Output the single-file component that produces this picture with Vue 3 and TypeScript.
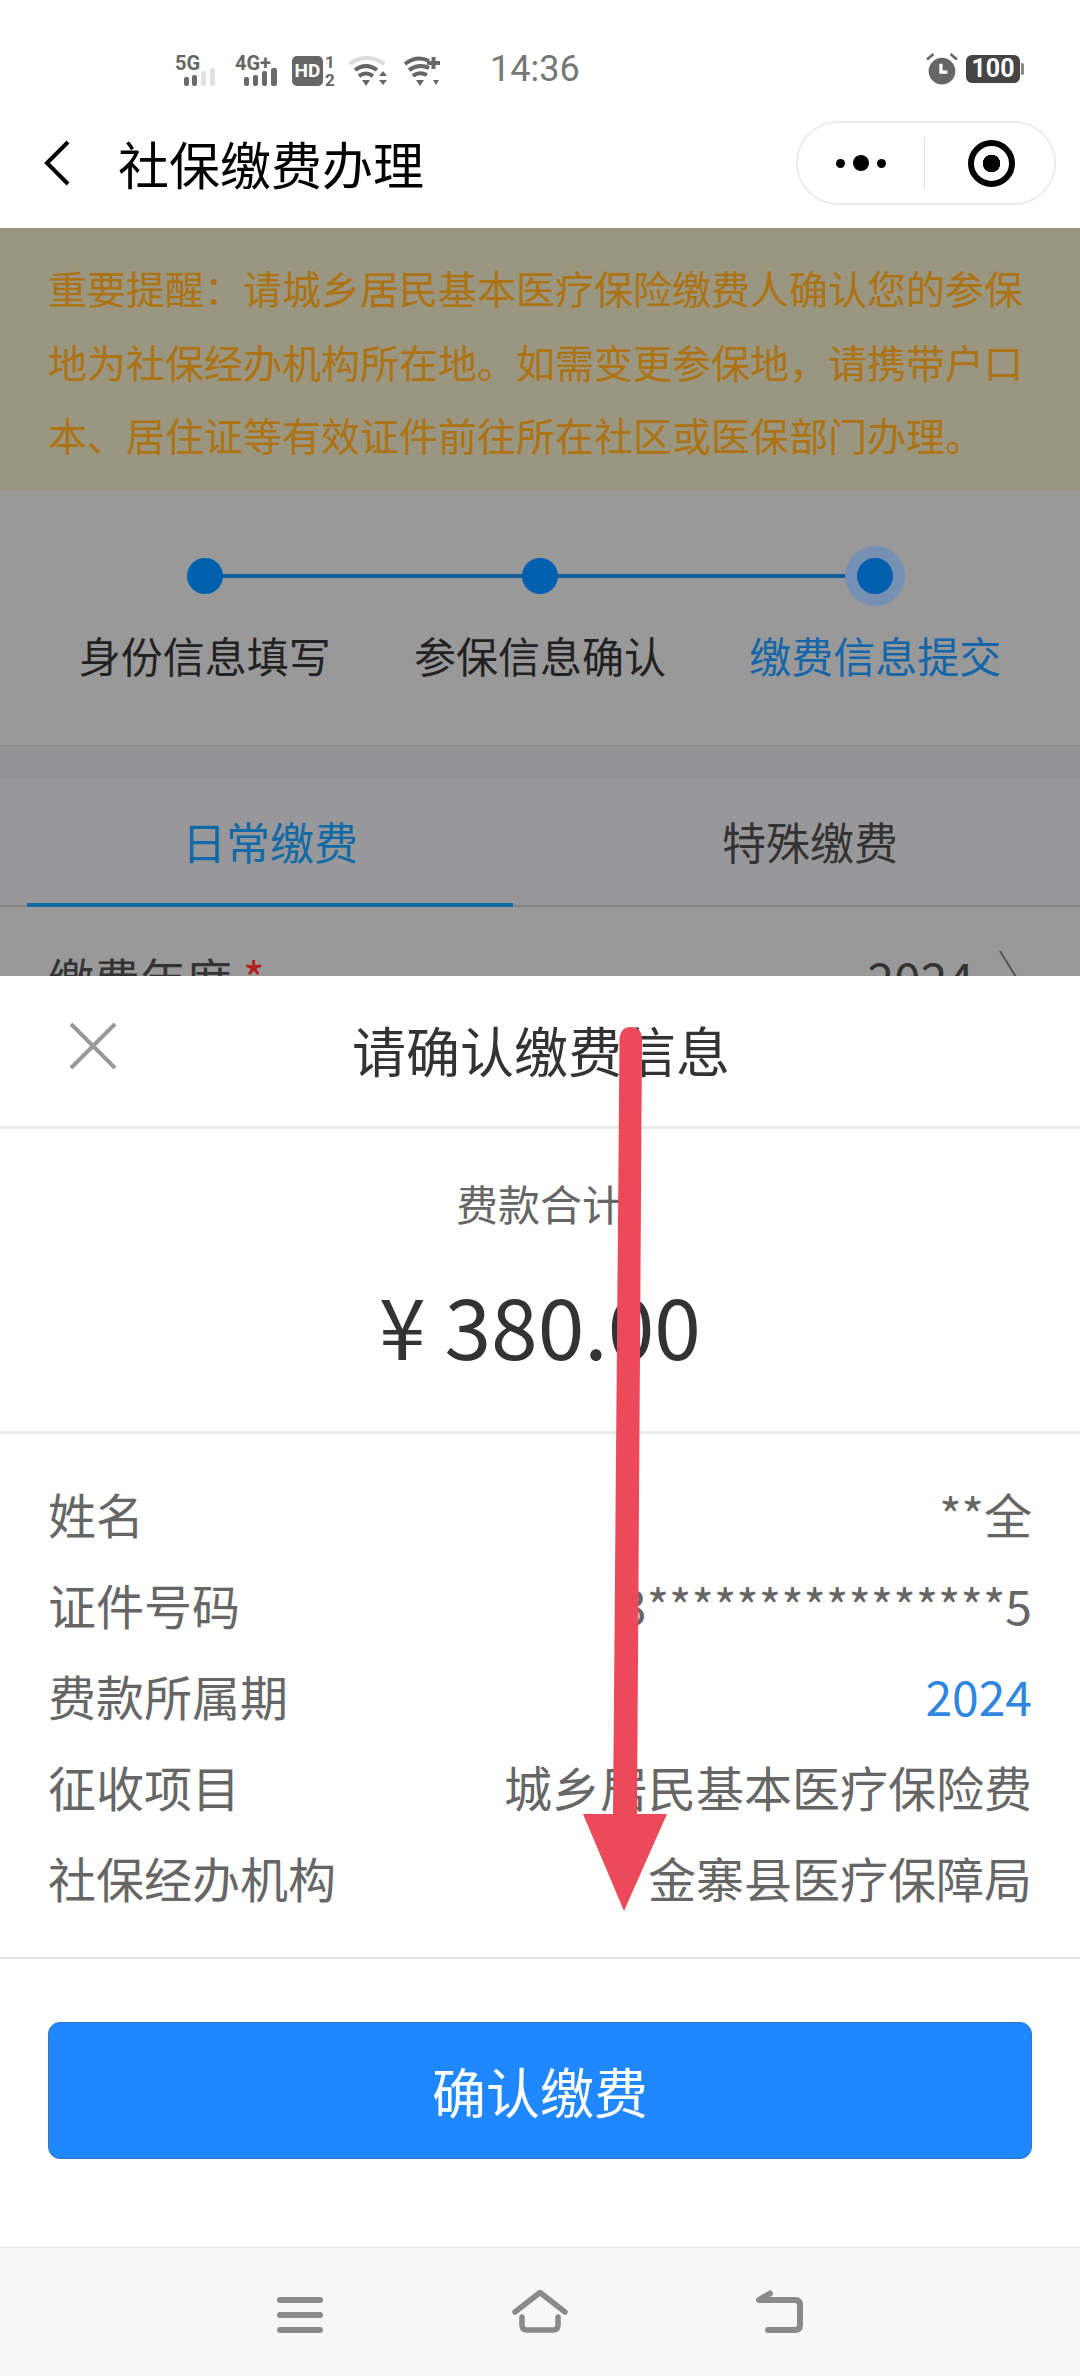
<script setup lang="ts">
interface InfoRow {
  label: string;
  value: string;
  link?: boolean;
}

const steps = [
  { label: '身份信息填写', current: false },
  { label: '参保信息确认', current: false },
  { label: '缴费信息提交', current: true },
];

const rows: InfoRow[] = [
  { label: '姓名', value: '**全' },
  { label: '证件号码', value: '3****************5' },
  { label: '费款所属期', value: '2024', link: true },
  { label: '征收项目', value: '城乡居民基本医疗保险费' },
  { label: '社保经办机构', value: '金寨县医疗保障局' },
];
</script>

<template>
  <div class="screen">
    <!-- Status bar -->
    <div class="status">
      <svg class="sig sig-5g" width="46" height="40" viewBox="0 -6 46 40">
        <text x="1" y="15" class="sig-text">5G</text>
        <rect x="10" y="22" width="5" height="9" rx="2" fill="#6a6a6a" />
        <rect x="18" y="20" width="5" height="11" rx="2" fill="#6a6a6a" />
        <rect x="27" y="16" width="5" height="15" rx="2" fill="#e2e2e2" />
        <rect x="36" y="13" width="5" height="18" rx="2" fill="#e2e2e2" />
      </svg>
      <svg class="sig sig-4g" width="46" height="40" viewBox="0 -6 46 40">
        <text x="0" y="15" class="sig-text">4G+</text>
        <rect x="9" y="22" width="5" height="9" rx="2" fill="#6a6a6a" />
        <rect x="18" y="20" width="5" height="11" rx="2" fill="#6a6a6a" />
        <rect x="27" y="16" width="5" height="15" rx="2" fill="#6a6a6a" />
        <rect x="36" y="13" width="6" height="18" rx="2" fill="#6a6a6a" />
      </svg>
      <svg class="sig sig-hd" width="44" height="40" viewBox="0 -6 44 40">
        <rect x="0" y="1" width="31" height="30" rx="5" fill="#666" />
        <text x="15.5" y="22" text-anchor="middle" class="hd-text">HD</text>
        <text x="38" y="13" text-anchor="middle" class="sim-text">1</text>
        <text x="38" y="31" text-anchor="middle" class="sim-text">2</text>
      </svg>
      <svg class="sig sig-wifi" width="40" height="40" viewBox="0 -6 40 40">
        <path d="M2 8Q17 -2 34 8" fill="none" stroke="#ddd" stroke-width="4" stroke-linecap="round" />
        <path d="M6 15Q17 7 28 15" fill="none" stroke="#666" stroke-width="4" />
        <path d="M10 21Q17 16 24 21" fill="none" stroke="#666" stroke-width="4" />
        <path d="M13 25H21L17 31Z" fill="#666" />
        <path d="M30 21L34 16L38 21ZM30 25H38L34 30Z" fill="#666" />
      </svg>
      <svg class="sig sig-wifi2" width="40" height="40" viewBox="0 -6 40 40">
        <path d="M2 9Q14 0 26 6" fill="none" stroke="#666" stroke-width="4" />
        <path d="M6 15Q16 8 26 13" fill="none" stroke="#666" stroke-width="4" />
        <path d="M10 21Q16 16 24 20" fill="none" stroke="#666" stroke-width="4" />
        <path d="M13 25H21L17 31Z" fill="#666" />
        <path d="M30 25H36L33 30Z" fill="#666" />
        <path d="M24 8H37M30.5 2V14" stroke="#666" stroke-width="4" fill="none" />
      </svg>
      <span class="time">14:36</span>
      <svg class="alarm" width="32" height="32" viewBox="0 0 30 30">
        <circle cx="15" cy="17" r="12.5" fill="#666" />
        <path d="M14 10V18H20" fill="none" stroke="#fff" stroke-width="3" />
        <path d="M1 6L7 1M29 6L23 1" stroke="#666" stroke-width="2.5" />
      </svg>
      <div class="battery"><span>100</span></div>
    </div>

    <!-- Title bar -->
    <div class="navbar">
      <svg class="back" width="30" height="46" viewBox="0 0 30 46">
        <path d="M26 2L5 23L26 44" fill="none" stroke="#000" stroke-width="4" />
      </svg>
      <div class="nav-title">社保缴费办理</div>
      <div class="capsule">
        <div class="capsule-more">
          <i></i><i class="big"></i><i></i>
        </div>
        <div class="capsule-line"></div>
        <div class="capsule-close"><i></i></div>
      </div>
    </div>

    <!-- Page under the sheet -->
    <div class="notice">
      重要提醒：请城乡居民基本医疗保险缴费人确认您的参保地为社保经办机构所在地。如需变更参保地，请携带户口本、居住证等有效证件前往所在社区或医保部门办理。
    </div>

    <div class="steps">
      <div
        v-for="step in steps"
        :key="step.label"
        :class="['step', { current: step.current }]"
      >
        <div class="step-mark"><span class="step-dot"></span></div>
        <div class="step-label">{{ step.label }}</div>
      </div>
    </div>

    <div class="tabs">
      <div class="tab active">日常缴费</div>
      <div class="tab">特殊缴费</div>
    </div>

    <div class="year-row">
      <span class="year-label">缴费年度<em>*</em></span>
      <span class="year-value">2024</span>
      <svg width="24" height="60" viewBox="0 0 24 60">
        <path d="M4 4L20 30" fill="none" stroke="#555" stroke-width="2" />
      </svg>
    </div>

    <!-- Confirm sheet -->
    <div class="sheet">
      <div class="sheet-head">
        <svg class="close" width="48" height="48" viewBox="0 0 48 48">
          <path d="M2 2L46 46M46 2L2 46" stroke="#999" stroke-width="4" fill="none" />
        </svg>
        <div class="sheet-title">请确认缴费信息</div>
      </div>

      <div class="total">
        <div class="total-label">费款合计</div>
        <div class="total-amount">¥ 380.00</div>
      </div>

      <div class="info">
        <div v-for="row in rows" :key="row.label" class="info-row">
          <span class="info-label">{{ row.label }}</span>
          <span :class="['info-value', { link: row.link }]">{{ row.value }}</span>
        </div>
      </div>

      <div class="action">
        <button class="confirm">确认缴费</button>
      </div>

      <div class="sysnav">
        <svg width="60" height="60" viewBox="0 0 60 60">
          <path d="M10 16H50M10 31H50M10 46H50" stroke="#8a8a8a" stroke-width="6" stroke-linecap="round" fill="none" />
        </svg>
        <svg width="60" height="60" viewBox="0 0 60 60">
          <path d="M5 28L30 8.5L55 28" stroke="#8a8a8a" stroke-width="5.5" stroke-linecap="round" stroke-linejoin="round" fill="none" />
          <path d="M12 33V41Q12 46 17 46H43Q48 46 48 41V33" stroke="#8a8a8a" stroke-width="5.5" stroke-linecap="round" fill="none" />
        </svg>
        <svg width="60" height="60" viewBox="0 0 60 60">
          <path d="M20 9.5L9 16H45Q50 16 50 21V41Q50 46 45 46H18" stroke="#8a8a8a" stroke-width="6" stroke-linecap="round" stroke-linejoin="round" fill="none" />
        </svg>
      </div>
    </div>

    <!-- Red arrow annotation drawn over the screenshot -->
    <svg class="arrow" width="110" height="900" viewBox="570 1020 110 900">
      <path
        d="M619.5 1040Q620 1027 631 1027Q642 1027 642 1040L637 1814L667 1814L624 1911L583 1814L613 1814Z"
        fill="#ec4a5a"
      />
    </svg>
  </div>
</template>

<style scoped>
.screen {
  position: relative;
  width: 1080px;
  height: 2376px;
  overflow: hidden;
  background: #939395;
  font-family: 'Noto Sans CJK SC', 'Noto Sans', sans-serif;
}

/* Status bar */
.status {
  display: flex;
  align-items: center;
  height: 104px;
  padding: 34px 60px 0 174px;
  box-sizing: border-box;
  background: #fff;
  color: #777;
}

.sig {
  flex: none;
}

.sig-4g {
  margin-left: 15px;
}

.sig-hd {
  margin-left: 11px;
}

.sig-wifi {
  margin-left: 13px;
}

.sig-wifi2 {
  margin-left: 14px;
}

.sig-text {
  font-family: Roboto, sans-serif;
  font-size: 20px;
  font-weight: 700;
  fill: #666;
}

.hd-text {
  font-family: Roboto, sans-serif;
  font-size: 19px;
  font-weight: 700;
  fill: #fff;
}

.sim-text {
  font-family: Roboto, sans-serif;
  font-size: 17px;
  font-weight: 700;
  fill: #666;
}

.time {
  margin-left: 47px;
  font-family: Roboto, sans-serif;
  font-size: 36px;
  color: #777;
}

.alarm {
  margin-left: auto;
}

.battery {
  position: relative;
  margin-left: 8px;
  width: 54px;
  height: 28px;
  border-radius: 6px;
  background: #444;
  color: #fff;
  text-align: center;
  font-family: Roboto, sans-serif;
  font-size: 25px;
  font-weight: 700;
  line-height: 28px;
}

.battery::after {
  content: '';
  position: absolute;
  right: -4px;
  top: 8px;
  width: 3px;
  height: 12px;
  border-radius: 0 2px 2px 0;
  background: #888;
}

/* Title bar */
.navbar {
  display: flex;
  align-items: center;
  height: 124px;
  padding-bottom: 6px;
  box-sizing: border-box;
  background: #fff;
}

.back {
  margin-left: 42px;
}

.nav-title {
  margin-left: 46px;
  font-size: 51px;
  line-height: 60px;
  color: #000;
}

.capsule {
  display: flex;
  align-items: center;
  margin-left: auto;
  margin-right: 24px;
  width: 260px;
  height: 84px;
  box-sizing: border-box;
  border: 2px solid #ececec;
  border-radius: 42px;
}

.capsule-more {
  display: flex;
  align-items: center;
  justify-content: center;
  gap: 8px;
  flex: 1;
}

.capsule-more i {
  width: 9px;
  height: 9px;
  border-radius: 50%;
  background: #000;
}

.capsule-more i.big {
  width: 16px;
  height: 16px;
}

.capsule-line {
  width: 1px;
  height: 52px;
  background: #e0e0e0;
}

.capsule-close {
  display: flex;
  align-items: center;
  justify-content: center;
  flex: 1;
  padding-left: 3px;
}

.capsule-close i {
  display: flex;
  width: 47px;
  height: 47px;
  box-sizing: border-box;
  border: 6px solid #000;
  border-radius: 50%;
  background: radial-gradient(circle, #000 8.5px, #fff 9px);
}

/* Dimmed page */
.notice {
  height: 262px;
  box-sizing: border-box;
  padding: 23px 48px 0;
  background: #9a9680;
  color: #ad7212;
  font-size: 39px;
  line-height: 73.5px;
}

.steps {
  display: grid;
  grid-template-columns: repeat(3, 1fr);
  height: 256px;
  box-sizing: border-box;
  padding: 56px 37px 0;
  border-bottom: 1px solid #8e8e8e;
  background: #999;
}

.step {
  position: relative;
  display: flex;
  flex-direction: column;
  align-items: center;
}

.step:not(:last-child)::after {
  content: '';
  position: absolute;
  left: 50%;
  top: 28px;
  width: 100%;
  height: 4px;
  background: #125f9c;
}

.step-mark {
  position: relative;
  z-index: 1;
  display: flex;
  align-items: center;
  justify-content: center;
  width: 60px;
  height: 60px;
  border-radius: 50%;
}

.step.current .step-mark {
  background: #7690b4;
}

.step-dot {
  width: 36px;
  height: 36px;
  border-radius: 50%;
  background: #0060b0;
}

.step-label {
  margin-top: 19px;
  font-size: 42px;
  line-height: 60px;
  white-space: nowrap;
  color: #222;
}

.step.current .step-label {
  color: #1566a8;
}

.tabs {
  display: grid;
  grid-template-columns: 1fr 1fr;
  margin-top: 32px;
  border-bottom: 2px solid #828282;
  background: #98989a;
}

.tab {
  position: relative;
  padding: 33px 0 34px;
  font-size: 44px;
  line-height: 60px;
  text-align: center;
  color: #333;
}

.tab.active {
  color: #116aa5;
}

.tab.active::after {
  content: '';
  position: absolute;
  left: 27px;
  right: 27px;
  bottom: -2px;
  height: 4px;
  background: #116aa5;
}

.year-row {
  display: flex;
  align-items: center;
  height: 200px;
  box-sizing: border-box;
  padding: 40px 60px 100px 48px;
  font-size: 46px;
  line-height: 60px;
  color: #333;
  background: #999;
}

.year-label em {
  margin-left: 11px;
  font-style: normal;
  color: #b51c1c;
}

.year-value {
  margin-left: auto;
  margin-right: 22px;
  font-size: 48px;
}

/* Confirm sheet */
.sheet {
  position: absolute;
  top: 976px;
  left: 0;
  right: 0;
  bottom: 0;
  display: flex;
  flex-direction: column;
  background: #fff;
}

.sheet-head {
  display: flex;
  align-items: center;
  height: 153px;
  box-sizing: border-box;
  padding-bottom: 2px;
  border-bottom: 3px solid #ebebeb;
}

.close {
  flex: none;
  margin-left: 69px;
  margin-bottom: 8px;
}

.sheet-title {
  margin-left: 235px;
  font-size: 54px;
  line-height: 70px;
  color: #333;
}

.total {
  height: 305px;
  box-sizing: border-box;
  padding-top: 44px;
  border-bottom: 3px solid #ebebeb;
  text-align: center;
}

.total-label {
  font-size: 42px;
  line-height: 60px;
  color: #666;
}

.total-amount {
  margin-top: 41px;
  font-size: 84px;
  line-height: 100px;
  color: #333;
}

.info {
  padding: 33px 48px 35px;
  border-bottom: 2px solid #e5e5e5;
}

.info-row {
  display: flex;
  align-items: center;
  justify-content: space-between;
  height: 91px;
  font-size: 48px;
  color: #666;
}

.info-value.link {
  color: #2f86e0;
}

.action {
  padding: 63px 48px 0;
}

.confirm {
  display: block;
  width: 100%;
  height: 137px;
  border: 1px solid #3573c4;
  border-radius: 12px;
  background: #1f87ff;
  color: #fff;
  font-family: inherit;
  font-size: 54px;
}

.sysnav {
  display: grid;
  grid-template-columns: repeat(3, 240px);
  justify-items: center;
  align-items: center;
  margin-top: auto;
  height: 129px;
  box-sizing: border-box;
  padding: 3px 180px 0;
  border-top: 1px solid #e8e8e8;
  background: #f7f7f7;
}

.arrow {
  position: absolute;
  left: 570px;
  top: 1020px;
}
</style>
